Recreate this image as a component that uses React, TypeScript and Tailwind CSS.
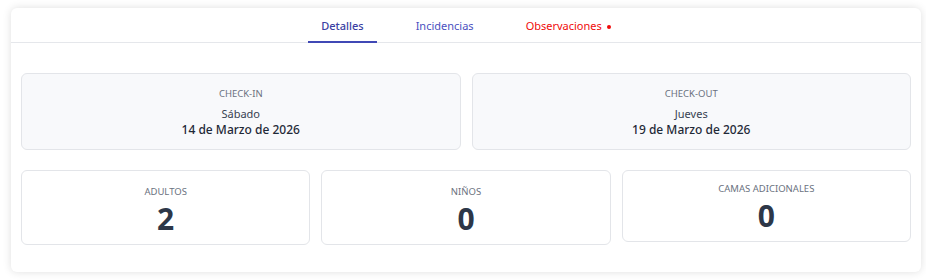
import React from "react";

const font = { fontFamily: '"Noto Sans", "Open Sans", sans-serif' };

function DateBox({ label, day, date }: { label: string; day: string; date: string }) {
  return (
    <div className="rounded-md border border-[#e3e5e9] bg-[#f8f9fb] pt-[13px] pb-[11px] text-center">
      <div className="text-[9.5px] leading-[14px] uppercase text-[#6b7280]">{label}</div>
      <div className="mt-[5px] text-[11px] leading-[16px] text-[#374151]">{day}</div>
      <div className="text-[12px] leading-[16px] font-medium text-[#1f2937]">{date}</div>
    </div>
  );
}

function CountBox({ label, value, tight }: { label: string; value: number; tight?: boolean }) {
  return (
    <div
      className={
        tight
          ? "rounded-md border border-[#e3e5e9] bg-white pt-[11px] pb-[7px] text-center"
          : "rounded-md border border-[#e3e5e9] bg-white pt-[14px] pb-[7px] text-center"
      }
    >
      <div className="text-[9.5px] leading-[14px] uppercase text-[#6b7280]">{label}</div>
      <div className="mt-[2px] text-[30px] leading-[36px] font-bold text-[#2d3748]">{value}</div>
    </div>
  );
}

export default function App() {
  return (
    <div className="h-[280px] w-[926px] bg-white pt-[8px] pl-[11px]" style={font}>
      <div className="h-[264px] w-[910px] rounded-md bg-white shadow-[0_0_8px_rgba(0,0,0,0.13)]">
        {/* Tabs */}
        <div className="flex h-[35px] justify-center gap-[26px] border-b border-[#e5e7eb] pt-[2px]">
          <button className="relative px-[13px] text-[11px] font-medium text-[#3b3fa3]">
            Detalles
            <span className="absolute inset-x-0 bottom-[-1px] h-[2px] bg-[#4048b5]" />
          </button>
          <button className="px-[13px] text-[11px] text-[#4a50c0]">Incidencias</button>
          <button className="flex items-center px-[13px] text-[11px] text-[#f00a0a]">
            Observaciones
            <span className="ml-[5px] mt-[2px] h-[4px] w-[4px] rounded-full bg-[#f00a0a]" />
          </button>
        </div>

        {/* Content */}
        <div className="px-[10px] pt-[30px]">
          <div className="grid grid-cols-2 gap-[11px]">
            <DateBox label="Check-in" day="Sábado" date="14 de Marzo de 2026" />
            <DateBox label="Check-out" day="Jueves" date="19 de Marzo de 2026" />
          </div>
          <div className="mt-[20px] grid grid-cols-3 items-start gap-[11px]">
            <CountBox label="Adultos" value={2} />
            <CountBox label="Niños" value={0} />
            <CountBox label="Camas adicionales" value={0} tight />
          </div>
        </div>
      </div>
    </div>
  );
}
